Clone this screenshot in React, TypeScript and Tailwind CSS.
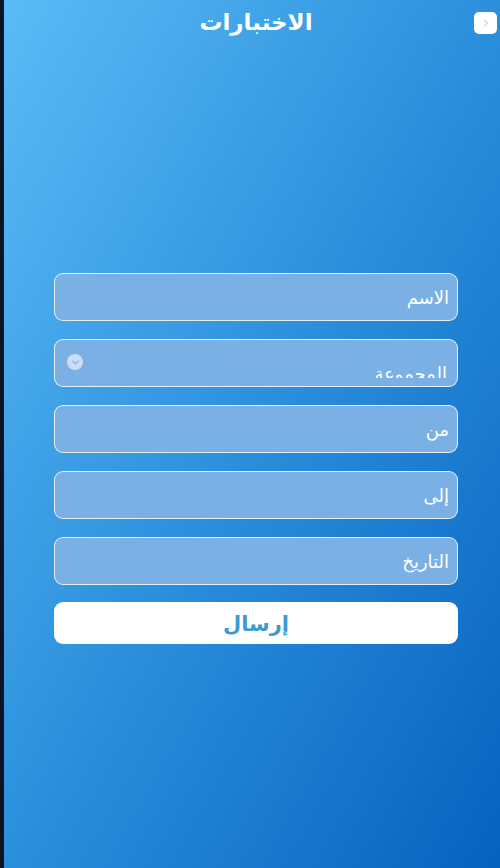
import { ChevronDown, ChevronRight } from 'lucide-react';

const fields = ['الاسم', 'المجموعة', 'من', 'إلى', 'التاريخ'];

export default function App() {
  return (
    <div
      className="flex h-[868px] w-[500px] overflow-hidden"
      style={{ fontFamily: '"Noto Sans", "DejaVu Sans", sans-serif' }}
    >
      <div className="w-[4px] shrink-0 bg-[#0b1326]" />
      <div className="flex flex-1 flex-col bg-gradient-to-br from-[#59bcf6] via-[#2b8fdc] to-[#0562bf]">
        <header className="relative h-[44px]">
          <h1 className="pt-[3px] pl-[8px] text-center text-[23px] leading-[36px] font-bold text-white" dir="rtl">
            الاختبارات
          </h1>
          <button className="absolute top-[12px] right-[3px] flex h-[22px] w-[23px] items-center justify-center rounded-[5px] bg-white">
            <ChevronRight className="h-[12px] w-[12px] text-[#8cc3ea]" strokeWidth={2} />
          </button>
        </header>

        <form dir="rtl" className="mt-[229px] mr-[42px] ml-[50px] flex flex-col gap-[18px]">
          {fields.map(label =>
            label === 'المجموعة' ? (
              <div
                key={label}
                className="relative h-[48px] overflow-hidden rounded-[9px] border border-white/80 bg-[#7bb0e5]"
              >
                <div className="h-[38px] overflow-hidden px-[10px] pt-[18px] text-[18px] leading-[30px] text-white">
                  {label}
                </div>
                <span className="absolute top-[14px] left-[12px] flex h-[16px] w-[16px] items-center justify-center rounded-full bg-white/60">
                  <ChevronDown className="h-[11px] w-[11px] text-[#7bb0e5]" strokeWidth={2.5} />
                </span>
              </div>
            ) : (
              <div
                key={label}
                className="flex h-[48px] items-center rounded-[9px] border border-white/80 bg-[#7bb0e5] px-[8px] text-[18px] text-white"
              >
                {label}
              </div>
            )
          )}
          <button
            type="button"
            className="-mt-[1px] h-[42px] rounded-[9px] bg-white text-[21px] leading-[42px] font-bold text-[#3b9ad6]"
          >
            إرسال
          </button>
        </form>
      </div>
    </div>
  );
}
